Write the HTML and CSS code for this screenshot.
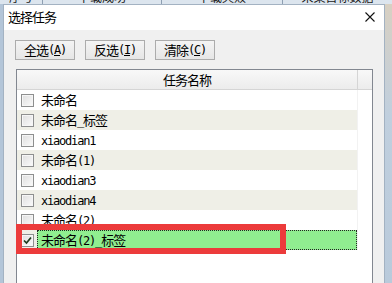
FILE: index.html
```
<!DOCTYPE html>
<html lang="zh-CN">
<head>
    <meta charset="UTF-8">
    <meta name="viewport" content="width=device-width, initial-scale=1.0">
    <title>选择任务</title>
    <link rel="stylesheet" href="styles.css">
</head>
<body>
<div class="desk">
    <div class="desk_head">
        <div class="cell c1">序号</div>
        <div class="cell c2">下载成功</div>
        <div class="cell c3">下载失败</div>
        <div class="cell c4">采集目标数据</div>
    </div>
    <div class="desk_main">
        <div class="side_l"></div>
        <div class="dialog">
            <div class="title">
                <span class="title_text">选择任务</span>
                <svg class="close" width="10" height="10" viewBox="0 0 10 10"><path d="M0.5 0.5L9.5 9.5M9.5 0.5L0.5 9.5" stroke="#111" stroke-width="1.1" fill="none"/></svg>
            </div>
            <div class="client">
                <div class="buttons">
                    <div class="btn">全选<span class="lat">(<u>A</u>)</span></div>
                    <div class="btn">反选<span class="lat">(<u>I</u>)</span></div>
                    <div class="btn">清除<span class="lat">(<u>C</u>)</span></div>
                </div>
                <div class="listbox">
                    <div class="list_head">
                        <div class="hcol1">任务名称</div>
                        <div class="hcol2"></div>
                    </div>
                    <div class="rows">
                        <div class="row"><div class="cell_main"><span class="chk"></span><span class="label">未命名</span></div></div>
                        <div class="row"><div class="cell_main"><span class="chk"></span><span class="label">未命名<span class="lat">_</span>标签</span></div></div>
                        <div class="row"><div class="cell_main"><span class="chk"></span><span class="label"><span class="lat">xiaodian1</span></span></div></div>
                        <div class="row"><div class="cell_main"><span class="chk"></span><span class="label">未命名<span class="lat">(1)</span></span></div></div>
                        <div class="row"><div class="cell_main"><span class="chk"></span><span class="label"><span class="lat">xiaodian3</span></span></div></div>
                        <div class="row"><div class="cell_main"><span class="chk"></span><span class="label"><span class="lat">xiaodian4</span></span></div></div>
                        <div class="row"><div class="cell_main"><span class="chk"></span><span class="label">未命名<span class="lat">(2)</span></span></div></div>
                        <div class="row"><div class="cell_main"><span class="chk on"><svg width="11" height="11" viewBox="0 0 11 11"><path d="M2 5.5L4.5 8L9 2.5" stroke="#1d3b1d" stroke-width="1.7" fill="none"/></svg></span><span class="label selected">未命名<span class="lat">(2)_</span>标签</span></div></div>
                    </div>
                    <div class="mark"></div>
                </div>
            </div>
        </div>
        <div class="side_r"></div>
    </div>
</div>
</body>
</html>
```

FILE: styles.css
```
body{
    margin: 0;
    font-family: "Noto Sans CJK SC", sans-serif;
    color: #000;
}
.desk{
    width: 392px;
    height: 283px;
    overflow: hidden;
    display: flex;
    flex-direction: column;
    background: #c9d6e3;
}
.desk_head{
    height: 4px;
    flex-shrink: 0;
    display: flex;
    background: #dce5ee;
    overflow: hidden;
}
.cell{
    height: 4px;
    border-right: 1px solid #8e9fb2;
    display: flex;
    align-items: flex-end;
    justify-content: center;
    overflow: hidden;
    font-size: 12px;
    line-height: 14px;
    color: #1a1a1a;
}
.c1{ width: 42px; }
.c2{ width: 118px; }
.c3{ width: 120px; }
.c4{ flex: 1; border-right: 0; }
.desk_main{
    flex: 1;
    display: flex;
    min-height: 0;
}
.side_l{
    width: 3px;
    background: #b3c5d8;
}
.side_r{
    width: 7px;
    background: linear-gradient(#d8d0c2, #c0cfde 40%, #b9cadb);
}
.dialog{
    width: 382px;
    box-sizing: border-box;
    border: 1px solid #a3b2c2;
    border-bottom: 0;
    display: flex;
    flex-direction: column;
    background: #f0f0f0;
    overflow: hidden;
}
.title{
    height: 25px;
    flex-shrink: 0;
    box-sizing: border-box;
    background: #fff;
    display: flex;
    align-items: flex-start;
    justify-content: space-between;
    padding: 5px 9px 0 4px;
}
.title_text{
    font-size: 13px;
    letter-spacing: -1px;
    line-height: 14px;
}
.close{
    margin-top: 2px;
}
.client{
    flex: 1;
    min-height: 0;
    overflow: hidden;
    padding: 10px 11px 0 11px;
}
.buttons{
    display: flex;
    gap: 10px;
}
.btn{
    width: 60px;
    height: 20px;
    box-sizing: border-box;
    border: 1px solid #acacac;
    background: linear-gradient(#f4f4f4, #e6e6e6);
    display: flex;
    align-items: center;
    justify-content: center;
    font-size: 13px;
    letter-spacing: -1px;
    line-height: 16px;
}
.lat{
    font-family: "DejaVu Sans Mono", monospace;
    font-size: 12px;
    letter-spacing: -1.2px;
}
.listbox{
    position: relative;
    margin: 9px 0 0 1px;
    width: 357px;
    height: 240px;
    box-sizing: border-box;
    border: 1px solid #828790;
    background: #fff;
}
.list_head{
    display: flex;
    height: 20px;
    box-sizing: border-box;
    border-bottom: 1px solid #d5d5d5;
    background: linear-gradient(#f8f8f8, #ececec);
}
.hcol1{
    width: 341px;
    box-sizing: border-box;
    border-right: 1px solid #d5d5d5;
    text-align: center;
    font-size: 13px;
    letter-spacing: -1px;
    line-height: 20px;
}
.hcol2{
    flex: 1;
}
.row{
    display: flex;
    height: 20px;
}
.cell_main{
    width: 340px;
    display: flex;
    align-items: center;
    border-right: 1px solid #f2f2f2;
}
.row:nth-child(even) .cell_main{
    background: #efefe7;
}
.chk{
    width: 13px;
    height: 13px;
    margin-left: 4px;
    box-sizing: border-box;
    border: 1px solid #8e8f8f;
    background: linear-gradient(135deg, #dedede, #fbfbfb);
    box-shadow: inset 0 0 0 1px #f6f6f6;
    display: flex;
    align-items: center;
    justify-content: center;
}
.label{
    flex: 1;
    margin-left: 3px;
    padding-left: 4px;
    height: 20px;
    box-sizing: border-box;
    font-size: 13px;
    letter-spacing: -1px;
    line-height: 20px;
    white-space: nowrap;
}
.selected{
    background: #90ee90;
    border: 1px dotted #222;
    line-height: 18px;
    padding-left: 3px;
}
.mark{
    position: absolute;
    left: -1px;
    top: 154px;
    width: 270px;
    height: 30px;
    box-sizing: border-box;
    border: 6px solid #ec3b3b;
}
```
